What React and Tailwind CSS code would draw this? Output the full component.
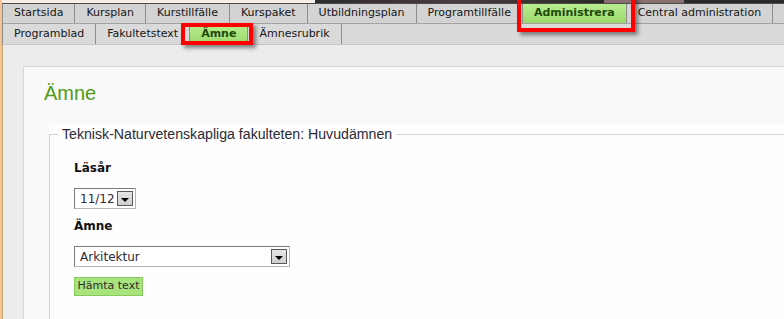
import React from "react";

const row1 = [
  "Startsida",
  "Kursplan",
  "Kurstillfälle",
  "Kurspaket",
  "Utbildningsplan",
  "Programtillfälle",
  "Administrera",
  "Central administration",
];
const row2 = ["Programblad", "Fakultetstext", "Ämne", "Ämnesrubrik"];

function Tab({ label, active }) {
  return active ? (
    <div className="flex items-center px-[11px] border-r border-[#8c8c8c] bg-gradient-to-b from-[#b8ee90] to-[#9cd86c] font-bold text-[#1e4a08]">
      {label}
    </div>
  ) : (
    <div className="flex items-center px-[11px] border-r border-[#8c8c8c] text-[#161616]">
      {label}
    </div>
  );
}

function Arrow() {
  return (
    <div className="w-[16px] h-[15px] border border-[#5a5a5a] bg-gradient-to-b from-[#e6e6e6] to-[#cfcfcf] flex items-end justify-center pb-[3px]">
      <svg width="8" height="4" viewBox="0 0 8 4">
        <path d="M0 0 H8 L4 4 Z" fill="#000" />
      </svg>
    </div>
  );
}

export default function App() {
  return (
    <div
      className="relative w-[784px] h-[319px] overflow-hidden flex flex-col bg-[#ececec] border-l-2 border-[#f4c592]"
      style={{ fontFamily: '"DejaVu Sans", Verdana, sans-serif' }}
    >
      {/* banner strip */}
      <div className="h-[3px] flex shrink-0">
        <div className="w-[313px] bg-[#f6efe8]" />
        <div className="flex-1 bg-gradient-to-r from-[#2e2c2c] via-[#4a3c3c] to-[#2a2a2a]" />
        <div className="w-[80px] bg-[#8a6f70]" />
        <div className="w-[100px] bg-[#2b2b2b]" />
      </div>

      {/* tab row 1 */}
      <div className="flex h-[21px] shrink-0 bg-[#d3d3d3] border-t border-t-[#4a4a4a] border-b border-b-[#a3a3a3] border-l border-l-[#8c8c8c] text-[11px]">
        {row1.map((t) => (
          <Tab key={t} label={t} active={t === "Administrera"} />
        ))}
      </div>

      {/* tab row 2 */}
      <div className="flex h-[21px] shrink-0 bg-[#dadada] border-b border-b-[#c6c6c6] border-l border-l-[#8c8c8c] text-[11px]">
        {row2.map((t) => (
          <Tab key={t} label={t} active={t === "Ämne"} />
        ))}
      </div>

      {/* body */}
      <div className="flex-1 flex flex-col border-l border-[#c9a67e]">
        <div className="flex-1 flex flex-col ml-[20px] mt-[21px] bg-[#f9f9f9] border-l border-t border-[#d8d8d8] pl-[20px] pt-[14px]">
          <h1
            className="text-[20px] leading-[24px] text-[#4f9c12]"
            style={{ fontFamily: '"Liberation Sans", Arial, sans-serif' }}
          >
            Ämne
          </h1>

          <div className="flex-1 flex flex-col ml-[5px] mt-[19px] bg-[#fefefe]">
            <div className="flex items-center h-[20px]">
              <div className="w-[9px] h-[10px] self-end border-t border-l border-[#d3d3d3]" />
              <span
                className="px-[4px] text-[14.15px] leading-[20px] text-[#2a2a36]"
                style={{ fontFamily: '"Liberation Sans", Arial, sans-serif' }}
              >
                Teknisk-Naturvetenskapliga fakulteten: Huvudämnen
              </span>
              <div className="flex-1 border-t border-[#d3d3d3]" />
            </div>

            <div className="flex-1 flex flex-col items-start border-l border-[#d3d3d3] pl-[24px] pt-[17px]">
              <div className="text-[12px] leading-[15px] font-bold text-[#111]">Läsår</div>
              <div className="mt-[12px] w-[62px] h-[21px] border border-t-[#7a7a7a] border-l-[#7a7a7a] border-r-[#b5b5b5] border-b-[#b5b5b5] bg-white flex items-center justify-between pl-[5px] pr-[2px]">
                <span className="text-[12px] text-[#2b2b3c]">11/12</span>
                <Arrow />
              </div>

              <div className="mt-[10px] text-[12px] leading-[15px] font-bold text-[#111]">Ämne</div>
              <div className="mt-[12px] w-[216px] h-[21px] border border-t-[#7a7a7a] border-l-[#7a7a7a] border-r-[#b5b5b5] border-b-[#b5b5b5] bg-white flex items-center justify-between pl-[5px] pr-[2px]">
                <span className="text-[12px] text-[#2b2b3c]">Arkitektur</span>
                <Arrow />
              </div>

              <button className="mt-[10px] h-[19px] w-[69px] bg-[#a8e37c] border border-[#86c95f] text-[11px] text-[#2d2d2d] flex items-center justify-center">
                Hämta text
              </button>
            </div>
          </div>
        </div>
      </div>

      {/* annotation boxes */}
      <div className="absolute left-[515px] top-[-4px] w-[118px] h-[36px] border-4 border-[#ff0000] shadow-[3px_3px_4px_rgba(0,0,0,0.45)]" />
      <div className="absolute left-[179px] top-[23px] w-[72px] h-[22px] border-4 border-[#ff0000] shadow-[3px_3px_4px_rgba(0,0,0,0.45)]" />
    </div>
  );
}
